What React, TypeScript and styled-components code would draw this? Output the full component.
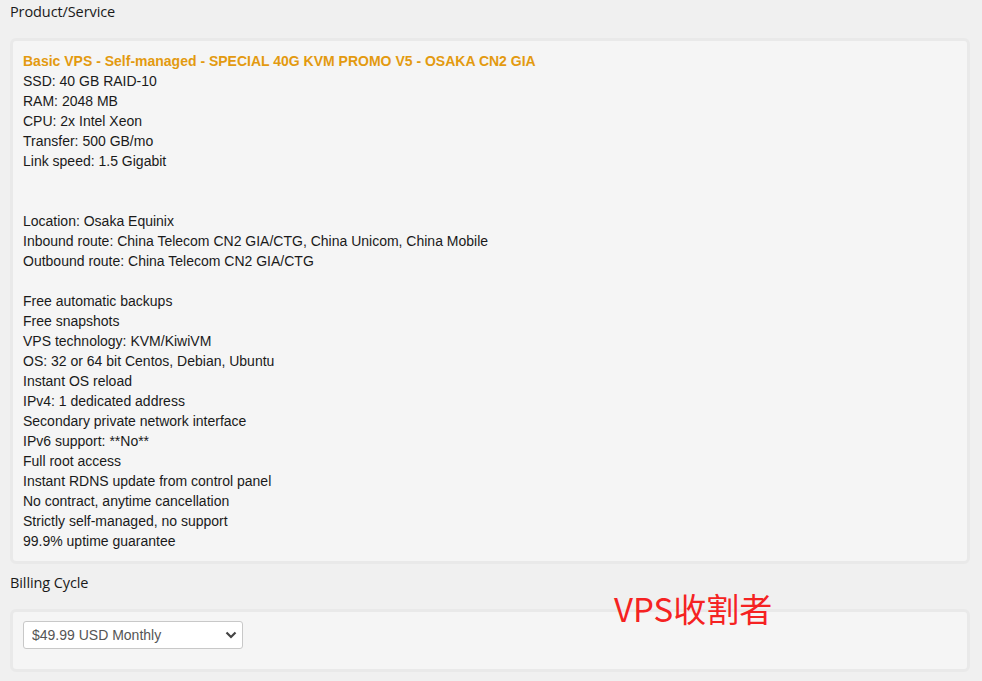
import React from "react";
import styled, { createGlobalStyle } from "styled-components";

const GlobalStyle = createGlobalStyle`
  html, body {
    margin: 0;
    padding: 0;
    background: #f0f0f0;
  }
  body {
    font-family: "Liberation Sans", Arial, sans-serif;
    font-size: 14px;
    color: #1a1a1a;
  }
`;

const features: string[] = [
  "SSD: 40 GB RAID-10",
  "RAM: 2048 MB",
  "CPU: 2x Intel Xeon",
  "Transfer: 500 GB/mo",
  "Link speed: 1.5 Gigabit",
  "",
  "",
  "Location: Osaka Equinix",
  "Inbound route: China Telecom CN2 GIA/CTG, China Unicom, China Mobile",
  "Outbound route: China Telecom CN2 GIA/CTG",
  "",
  "Free automatic backups",
  "Free snapshots",
  "VPS technology: KVM/KiwiVM",
  "OS: 32 or 64 bit Centos, Debian, Ubuntu",
  "Instant OS reload",
  "IPv4: 1 dedicated address",
  "Secondary private network interface",
  "IPv6 support: **No**",
  "Full root access",
  "Instant RDNS update from control panel",
  "No contract, anytime cancellation",
  "Strictly self-managed, no support",
  "99.9% uptime guarantee",
];

function App() {
  return (
    <Page>
      <GlobalStyle />
      <SectionTitle>Product/Service</SectionTitle>
      <Panel>
        <ProductName>
          Basic VPS - Self-managed - SPECIAL 40G KVM PROMO V5 - OSAKA CN2 GIA
        </ProductName>
        {features.map((line, i) => (
          <Line key={i}>{line}</Line>
        ))}
      </Panel>

      <SectionTitle $gap={7}>Billing Cycle</SectionTitle>
      <Panel $compact>
        <Select defaultValue="monthly">
          <option value="monthly">$49.99 USD Monthly</option>
          <option value="quarterly">$119.99 USD Quarterly</option>
          <option value="annually">$359.99 USD Annually</option>
        </Select>
      </Panel>

      <Watermark>VPS收割者</Watermark>
    </Page>
  );
}

const Page = styled.div`
  position: relative;
  padding: 0 12px 12px 10px;
  min-height: 681px;
  box-sizing: border-box;
`;

const SectionTitle = styled.div<{ $gap?: number }>`
  font-family: "Open Sans", "Noto Sans", sans-serif;
  font-size: 14.5px;
  line-height: 24px;
  letter-spacing: -0.1px;
  color: #1a1a1a;
  margin-top: ${(p) => p.$gap ?? 0}px;
  margin-bottom: 14px;
`;

const Panel = styled.div<{ $compact?: boolean }>`
  background: #f5f5f5;
  border: 3px solid #e9e9e9;
  border-radius: 6px;
  padding: ${(p) => (p.$compact ? "9px 10px 20px" : "10px 10px 10px")};
`;

const ProductName = styled.div`
  font-weight: bold;
  color: #e39a10;
  line-height: 20px;
`;

const Line = styled.div`
  line-height: 20px;
  min-height: 20px;
  white-space: pre;
`;

const Select = styled.select`
  display: block;
  box-sizing: border-box;
  width: 220px;
  height: 28px;
  padding: 0 8px;
  font-family: "Liberation Sans", Arial, sans-serif;
  font-size: 14px;
  color: #555;
  background-color: #fff;
  border: 1px solid #c8c8c8;
  border-radius: 3px;
  appearance: none;
  background-image: url("data:image/svg+xml,%3Csvg xmlns='http://www.w3.org/2000/svg' width='12' height='8' viewBox='0 0 12 8'%3E%3Cpath d='M1.5 1.5 6 6l4.5-4.5' fill='none' stroke='%23444' stroke-width='2.2'/%3E%3C/svg%3E");
  background-repeat: no-repeat;
  background-position: right 5px center;
  outline: none;
`;

const Watermark = styled.div`
  position: absolute;
  left: 614px;
  top: 586px;
  font-family: "Noto Sans CJK SC", "Noto Sans", sans-serif;
  font-size: 33px;
  line-height: 44px;
  color: #f52222;
  pointer-events: none;
`;

export default App;
